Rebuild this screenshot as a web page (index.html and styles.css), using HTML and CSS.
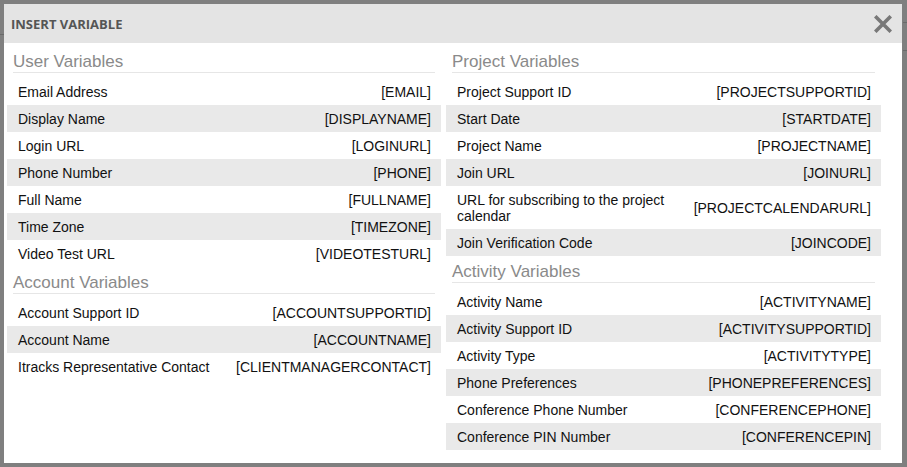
FILE: index.html
```html
<!DOCTYPE html>
<html lang="en">
<head>
    <meta charset="UTF-8">
    <title>Insert Variable</title>
    <link rel="stylesheet" href="styles.css">
</head>
<body>
    <div class="overlay">
        <div class="dialog">
            <div class="dialog-header">
                <span class="dialog-title">INSERT VARIABLE</span>
                <button class="close-btn" title="Close">
                    <svg width="18" height="18" viewBox="0 0 18 18">
                        <path d="M2.5 2.5 L15.5 15.5 M15.5 2.5 L2.5 15.5" stroke="#787878" stroke-width="3.6" stroke-linecap="square"/>
                    </svg>
                </button>
            </div>

            <div class="dialog-body">
                <!-- coluna esquerda -->
                <div class="var-column">
                    <div class="var-group">
                        <h3 class="group-title">User Variables</h3>
                        <div class="var-row"><span class="var-name">Email Address</span><span class="var-code">[EMAIL]</span></div>
                        <div class="var-row"><span class="var-name">Display Name</span><span class="var-code">[DISPLAYNAME]</span></div>
                        <div class="var-row"><span class="var-name">Login URL</span><span class="var-code">[LOGINURL]</span></div>
                        <div class="var-row"><span class="var-name">Phone Number</span><span class="var-code">[PHONE]</span></div>
                        <div class="var-row"><span class="var-name">Full Name</span><span class="var-code">[FULLNAME]</span></div>
                        <div class="var-row"><span class="var-name">Time Zone</span><span class="var-code">[TIMEZONE]</span></div>
                        <div class="var-row"><span class="var-name">Video Test URL</span><span class="var-code">[VIDEOTESTURL]</span></div>
                    </div>
                    <div class="var-group">
                        <h3 class="group-title">Account Variables</h3>
                        <div class="var-row"><span class="var-name">Account Support ID</span><span class="var-code">[ACCOUNTSUPPORTID]</span></div>
                        <div class="var-row"><span class="var-name">Account Name</span><span class="var-code">[ACCOUNTNAME]</span></div>
                        <div class="var-row"><span class="var-name">Itracks Representative Contact</span><span class="var-code">[CLIENTMANAGERCONTACT]</span></div>
                    </div>
                </div>

                <!-- coluna direita -->
                <div class="var-column">
                    <div class="var-group">
                        <h3 class="group-title">Project Variables</h3>
                        <div class="var-row"><span class="var-name">Project Support ID</span><span class="var-code">[PROJECTSUPPORTID]</span></div>
                        <div class="var-row"><span class="var-name">Start Date</span><span class="var-code">[STARTDATE]</span></div>
                        <div class="var-row"><span class="var-name">Project Name</span><span class="var-code">[PROJECTNAME]</span></div>
                        <div class="var-row"><span class="var-name">Join URL</span><span class="var-code">[JOINURL]</span></div>
                        <div class="var-row"><span class="var-name">URL for subscribing to the project calendar</span><span class="var-code">[PROJECTCALENDARURL]</span></div>
                        <div class="var-row"><span class="var-name">Join Verification Code</span><span class="var-code">[JOINCODE]</span></div>
                    </div>
                    <div class="var-group">
                        <h3 class="group-title">Activity Variables</h3>
                        <div class="var-row"><span class="var-name">Activity Name</span><span class="var-code">[ACTIVITYNAME]</span></div>
                        <div class="var-row"><span class="var-name">Activity Support ID</span><span class="var-code">[ACTIVITYSUPPORTID]</span></div>
                        <div class="var-row"><span class="var-name">Activity Type</span><span class="var-code">[ACTIVITYTYPE]</span></div>
                        <div class="var-row"><span class="var-name">Phone Preferences</span><span class="var-code">[PHONEPREFERENCES]</span></div>
                        <div class="var-row"><span class="var-name">Conference Phone Number</span><span class="var-code">[CONFERENCEPHONE]</span></div>
                        <div class="var-row"><span class="var-name">Conference PIN Number</span><span class="var-code">[CONFERENCEPIN]</span></div>
                    </div>
                </div>
            </div>
        </div>
    </div>
</body>
</html>
```

FILE: styles.css
```css
body {
    margin: 0;
    font-family: "Liberation Sans", Arial, sans-serif;
    background-color: #7f7f7f;
}
.overlay {
    padding: 4px;
    height: 459px;
    background:
        linear-gradient(#6a6a6a, #6a6a6a) 0 34px / 4px 1px no-repeat,
        linear-gradient(#6a6a6a, #6a6a6a) right 0 top 22px / 4px 1px no-repeat,
        linear-gradient(#6a6a6a, #6a6a6a) right 0 top 50px / 4px 1px no-repeat,
        #7f7f7f;
}
.dialog {
    width: 898px;
    height: 459px;
    background-color: white;
}
.dialog-header {
    display: flex;
    align-items: center;
    justify-content: space-between;
    height: 39px;
    padding: 0 10px 0 7px;
    background-color: #e4e4e4;
}
.dialog-title {
    font-family: "Open Sans", sans-serif;
    font-weight: bold;
    font-size: 13px;
    color: #555;
    padding-top: 1px;
}
.close-btn {
    width: 18px;
    height: 18px;
    padding: 0;
    border: none;
    background: transparent;
    cursor: pointer;
    display: flex;
    margin-top: 1px;
}
.dialog-body {
    display: grid;
    grid-template-columns: 434px 435px;
    column-gap: 5px;
    padding: 3px 21px 0 3px;
}
.group-title {
    margin: 0 6px 5px 6px;
    padding: 6px 0 0 0;
    height: 20px;
    line-height: 20px;
    font-size: 17px;
    font-weight: normal;
    color: #8a8a8a;
    border-bottom: 1px solid #e6e6e6;
}
.var-row {
    display: flex;
    justify-content: space-between;
    align-items: center;
    gap: 10px;
    padding: 6px 10px 5px 11px;
    font-size: 14px;
    line-height: 16px;
    color: #111;
}
.var-group .var-row:nth-child(odd) {
    background-color: #e9e9e9;
}
.var-code {
    white-space: nowrap;
}
```
